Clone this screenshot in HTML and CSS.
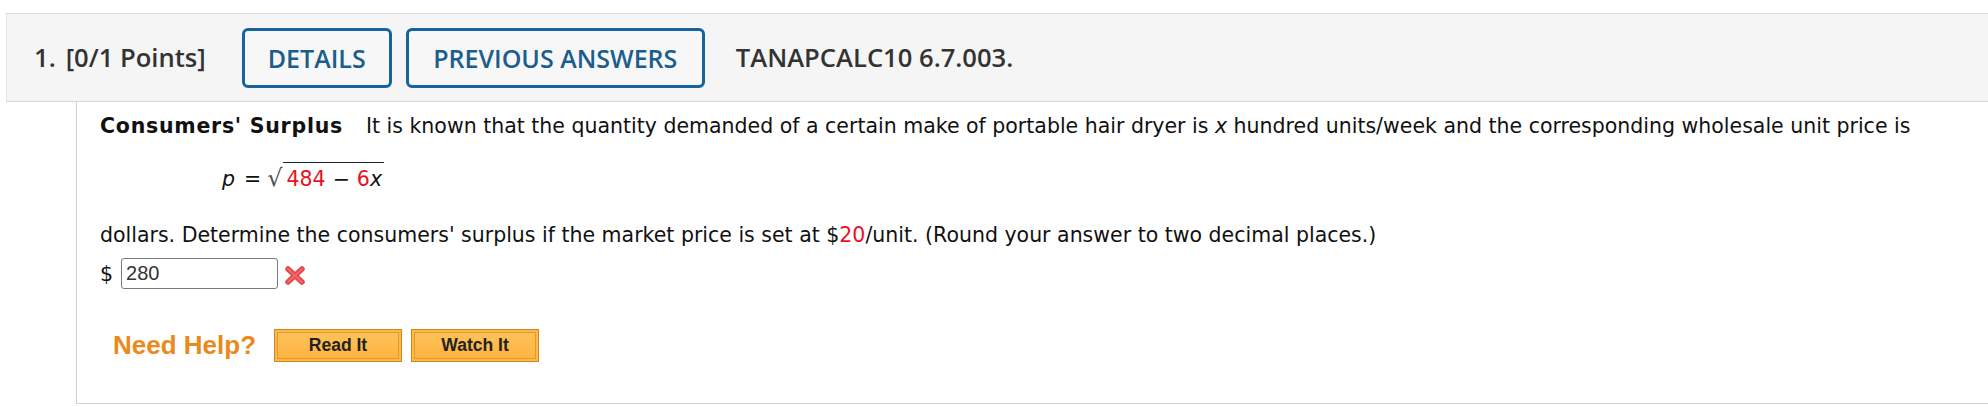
FILE: index.html
```html
<!DOCTYPE html>
<html>
<head>
<meta charset="utf-8">
<link rel="stylesheet" href="styles.css">
</head>
<body>
<div class="question">
  <div class="qheader">
    <span class="qnum">1.</span>
    <span class="qpoints">[0/1 Points]</span>
    <button class="hbtn details">DETAILS</button>
    <button class="hbtn prev">PREVIOUS ANSWERS</button>
    <span class="qid">TANAPCALC10 6.7.003.</span>
  </div>
  <div class="qbody">
    <p class="line first"><b class="topic">Consumers' Surplus</b><span class="intro">It is known that the quantity demanded of a certain make of portable hair dryer is <i>x</i> hundred units/week and the corresponding wholesale unit price is</span></p>
    <div class="formula">
      <i class="var">p</i><span class="eq">=</span><span class="sqrt"><span class="radical">&radic;</span><span class="radicand"><span class="red">484</span><span class="minus">&minus;</span><span class="red">6</span><i class="var">x</i></span></span>
    </div>
    <p class="line">dollars. Determine the consumers' surplus if the market price is set at $<span class="red">20</span>/unit. (Round your answer to two decimal places.)</p>
    <div class="answer">
      <span class="dollar">$</span>
      <input class="ans" type="text" value="280">
      <svg class="wrong" width="22" height="19" viewBox="0 0 22 19">
        <path d="M4 3 L18 16 M18 3 L4 16" stroke="#e3464b" stroke-width="5.5" stroke-linecap="round"/>
        <path d="M4 3 L18 16 M18 3 L4 16" stroke="#f8878a" stroke-width="2" stroke-linecap="round" opacity="0.55"/>
      </svg>
    </div>
    <div class="help">
      <span class="needhelp">Need Help?</span>
      <button class="hlp">Read It</button>
      <button class="hlp">Watch It</button>
    </div>
  </div>
</div>
</body>
</html>
```
FILE: styles.css
```css
html, body {
  margin: 0;
  padding: 0;
  background: #ffffff;
}
.question {
  padding-top: 13px;
}
.qheader {
  margin-left: 6px;
  height: 87px;
  background: #f5f5f5;
  border-top: 1px solid #dcdcdc;
  border-bottom: 1px solid #d6d6d6;
  border-left: 1px solid #e4e4e4;
  display: flex;
  align-items: center;
  padding-left: 27px;
  font-family: "Open Sans", sans-serif;
  font-weight: 600;
  color: #333333;
  font-size: 25.6px;
}
.qnum {
  margin-right: 10px;
}
.qpoints {
  margin-right: 36px;
}
.hbtn {
  font-family: "Open Sans", sans-serif;
  font-weight: 600;
  font-size: 25px;
  color: #1b5d8c;
  background: #f7f7f8;
  border: 3px solid #15649a;
  border-radius: 6px;
  height: 60px;
  padding: 0;
  margin-top: 0;
}
.details {
  width: 150px;
  margin-right: 14px;
}
.prev {
  width: 299px;
  margin-right: 31px;
}
.qid {
  color: #333333;
}
.qbody {
  margin-left: 76px;
  border-left: 1px solid #cfcfcf;
  border-bottom: 1px solid #cfcfcf;
  padding-left: 23px;
  padding-top: 11px;
  padding-bottom: 41px;
  font-family: "DejaVu Sans", Verdana, sans-serif;
  font-size: 20.5px;
  color: #111111;
}
.line {
  margin: 0;
  line-height: 26px;
}
.topic {
  margin-right: 23px;
  letter-spacing: 0.75px;
}
.formula {
  margin-left: 122px;
  margin-top: 19px;
  margin-bottom: 30px;
  display: flex;
  align-items: flex-end;
  height: 34px;
  line-height: 26px;
}
.var {
  font-style: italic;
}
.eq {
  margin: 0 6px 0 9px;
}
.sqrt {
  display: inline-flex;
  align-items: flex-end;
}
.radical {
  color: #555;
  font-size: 24px;
  line-height: 28px;
}
.radicand {
  border-top: 1px solid #222;
  padding: 3px 2px 0 4px;
  line-height: 26px;
}
.red {
  color: #e8121f;
}
.minus {
  margin: 0 7px;
}
.answer {
  margin-top: 10px;
  display: flex;
  align-items: center;
  height: 31px;
}
.dollar {
  margin-right: 8px;
}
.ans {
  box-sizing: border-box;
  width: 157px;
  height: 31px;
  border: 1px solid #7a7a7a;
  border-radius: 3px;
  font-family: "Liberation Sans", Arial, sans-serif;
  font-size: 20px;
  color: #333;
  padding: 0 4px;
  margin: 0;
}
.wrong {
  margin-left: 6px;
  margin-top: 4px;
}
.help {
  margin-top: 40px;
  margin-left: 13px;
  display: flex;
  align-items: center;
}
.needhelp {
  font-family: "Liberation Sans", Arial, sans-serif;
  font-weight: bold;
  font-size: 26px;
  color: #ea8a1c;
  margin-right: 18px;
}
.hlp {
  width: 128px;
  height: 33px;
  margin-right: 9px;
  border: 1px solid #d0851f;
  box-shadow: inset 0 0 0 2px #fdb846, inset 0 0 0 3px #e19a30;
  background: linear-gradient(#fec35a, #fdb240);
  font-family: "Liberation Sans", Arial, sans-serif;
  font-weight: bold;
  font-size: 17.5px;
  color: #222;
  padding: 0;
}
```
